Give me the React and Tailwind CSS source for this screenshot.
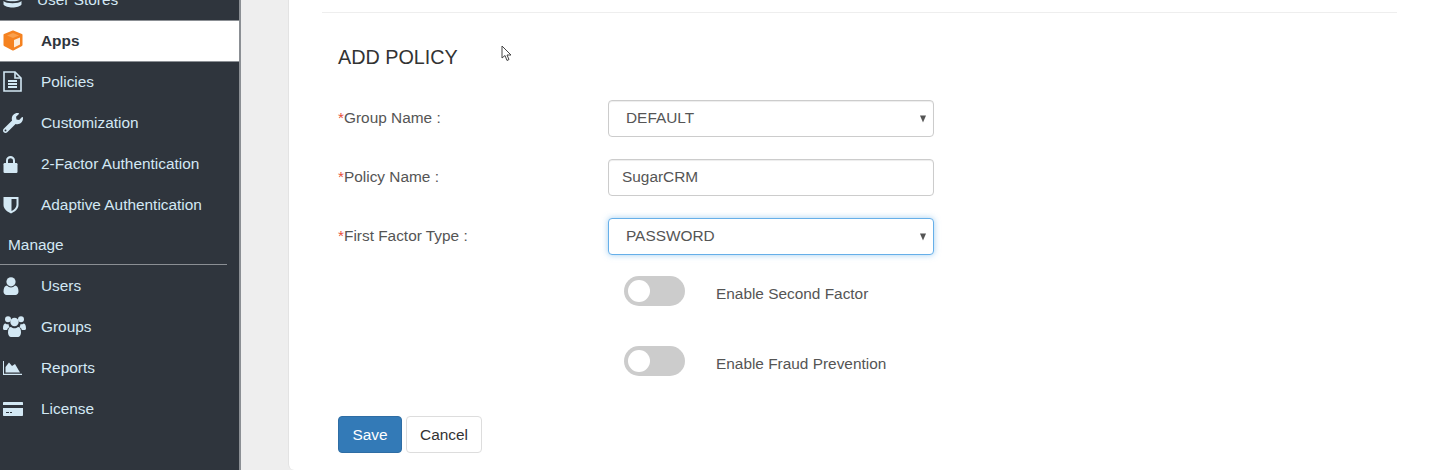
import React from 'react';
import { FaWrench } from 'react-icons/fa';

const CubeIcon = () => (
  <svg width="20" height="21" viewBox="0 0 20 21">
    <path d="M10 1.5 L18.5 5 V15 L10 19.5 L1.5 15 V5 Z" fill="#f58220" stroke="#f58220" strokeWidth="2" strokeLinejoin="round" />
    <path d="M10 3 L16 5.5 L10 8 L4 5.5 Z" fill="#f9a04e" />
    <path d="M11 10 L17 7.5 V14.5 L11 17.5 Z" fill="#fdeedd" />
  </svg>
);

const DatabaseIcon = () => (
  <svg width="19" height="20" viewBox="0 0 19 20" fill="currentColor">
    <ellipse cx="9.5" cy="3.5" rx="9" ry="3.5" />
    <path d="M0.5 6 C3 9 16 9 18.5 6 V9 C16 12 3 12 0.5 9 Z" />
    <path d="M0.5 11 C3 14 16 14 18.5 11 V14.5 C16 18.5 3 18.5 0.5 14.5 Z" />
  </svg>
);

const FileIcon = () => (
  <svg width="19" height="21" viewBox="0 0 19 21" fill="none" stroke="currentColor">
    <path d="M1 1 H12 L18 7 V20 H1 Z" strokeWidth="1.6" />
    <path d="M12 1 V7 H18" strokeWidth="1.6" />
    <path d="M5 10 H14 M5 13 H14 M5 16 H14" strokeWidth="2" />
  </svg>
);

const LockIcon = () => (
  <svg width="15" height="18" viewBox="0 0 15 18" fill="currentColor">
    <path d="M3 8 V5.5 C3 -0.5 12 -0.5 12 5.5 V8 H10 V5.5 C10 2.5 5 2.5 5 5.5 V8 Z" />
    <rect x="0.5" y="8" width="14" height="10" rx="1.2" />
  </svg>
);

const ShieldIcon = () => (
  <svg width="16" height="18" viewBox="0 0 16 18">
    <path d="M0.5 1 H15.5 V9 C15.5 13 11.5 16 8 17.5 C4.5 16 0.5 13 0.5 9 Z" fill="currentColor" />
    <path d="M8.5 3 H13.5 V9 C13.5 11.5 11 13.8 8.5 15 Z" fill="#2f353d" />
  </svg>
);

const UserIcon = () => (
  <svg width="16" height="18" viewBox="0 0 16 18" fill="currentColor">
    <circle cx="8" cy="4.8" r="4.6" />
    <path d="M0.5 14.5 C0.5 10.5 2 8.5 4 8.5 C5 9.8 6.5 10.4 8 10.4 C9.5 10.4 11 9.8 12 8.5 C14 8.5 15.5 10.5 15.5 14.5 C15.5 16.5 14 18 12.5 18 H3.5 C2 18 0.5 16.5 0.5 14.5 Z" />
  </svg>
);

const GroupIcon = () => (
  <svg width="23" height="21" viewBox="0 0 23 21" fill="currentColor">
    <circle cx="5" cy="3.2" r="3" />
    <circle cx="18" cy="3.2" r="3" />
    <circle cx="11.5" cy="6" r="4.2" />
    <path d="M0 12.5 C0 9 1 7.5 2.5 7.5 C3.5 8.3 4.5 8.5 5.6 8.3 C5.8 9.8 6 10.5 6.5 11.2 C5.2 11.8 4.5 12.6 4.2 14 H1.5 C0.5 14 0 13.3 0 12.5 Z" />
    <path d="M23 12.5 C23 9 22 7.5 20.5 7.5 C19.5 8.3 18.5 8.5 17.4 8.3 C17.2 9.8 17 10.5 16.5 11.2 C17.8 11.8 18.5 12.6 18.8 14 H21.5 C22.5 14 23 13.3 23 12.5 Z" />
    <path d="M5 16.5 C5 13 6 11 8 11 C9 12 10.3 12.3 11.5 12.3 C12.7 12.3 14 12 15 11 C17 11 18 13 18 16.5 C18 19 16.5 21 15 21 H8 C6.5 21 5 19 5 16.5 Z" />
  </svg>
);

const ChartIcon = () => (
  <svg width="19" height="14" viewBox="0 0 19 14" fill="currentColor">
    <path d="M0 0 H1 V12.8 H19 V14 H0 Z" />
    <path d="M2.5 11.5 V6 L6 1.5 L9 5 L12 3 L17 11.5 Z" />
  </svg>
);

const CardIcon = () => (
  <svg width="20" height="14" viewBox="0 0 20 14" fill="currentColor">
    <path d="M1 0 H19 C19.6 0 20 0.4 20 1 V3 H0 V1 C0 0.4 0.4 0 1 0 Z" />
    <path fillRule="evenodd" d="M0 6 H20 V13 C20 13.6 19.6 14 19 14 H1 C0.4 14 0 13.6 0 13 Z M3 10 V11 H6 V10 Z M7 10 V11 H9 V10 Z" />
  </svg>
);

const topItems = [
  { label: 'Policies', icon: <FileIcon /> },
  { label: 'Customization', icon: <FaWrench size={20} /> },
  { label: '2-Factor Authentication', icon: <LockIcon /> },
  { label: 'Adaptive Authentication', icon: <ShieldIcon /> },
];

const manageItems = [
  { label: 'Users', icon: <UserIcon /> },
  { label: 'Groups', icon: <GroupIcon /> },
  { label: 'Reports', icon: <ChartIcon /> },
  { label: 'License', icon: <CardIcon /> },
];

const NavItem = ({ label, icon }) => (
  <div className="flex h-[41px] items-center text-[#d3e8f4]">
    <span className="flex w-[41px] items-center pl-[3px]">{icon}</span>
    <span>{label}</span>
  </div>
);

const Arrow = () => (
  <span className="absolute right-[8px] top-1/2 h-0 w-0 -translate-y-1/2 border-x-[3.5px] border-t-[7px] border-x-transparent border-t-[#555]" />
);

const Field = ({ label, children }) => (
  <div className="flex items-center">
    <label className="w-[270px] pb-[2px] text-[#555]">
      <span className="text-[#e8503a]">*</span>
      {label}
    </label>
    <div className="relative w-[326px]">{children}</div>
  </div>
);

const Toggle = ({ label }) => (
  <div className="flex items-center pl-[286px]">
    <span className="flex h-[30px] w-[61px] items-center rounded-full bg-[#ccc] pl-[4px]">
      <span className="h-[22px] w-[22px] rounded-full bg-white" />
    </span>
    <span className="ml-[31px] pt-[6px] text-[#555]">{label}</span>
  </div>
);

const App = () => (
  <div className="flex h-[470px] w-[1430px] overflow-hidden bg-[#eeeeee] text-[15.4px] font-['Liberation_Sans',Arial,sans-serif]">
    <aside className="h-full w-[241px] shrink-0 border-r-2 border-[#8b8f94] bg-[#2f353d]">
      <div className="-mt-[21px] flex h-[41px] items-center text-[#d3e8f4]">
        <span className="flex w-[37px] items-center pl-[3px]">
          <DatabaseIcon />
        </span>
        <span>User Stores</span>
      </div>
      <div className="-mb-px flex h-[42px] items-center border-y border-[#8b8f94] bg-white font-bold text-[#2f353d]">
        <span className="-mt-[2px] flex w-[41px] items-center pl-[3px]">
          <CubeIcon />
        </span>
        <span>Apps</span>
      </div>
      {topItems.map((item) => (
        <NavItem key={item.label} {...item} />
      ))}
      <div className="mr-[12px] flex h-[40px] items-center border-b border-[#8b8f94] pl-[8px] text-[#d3e8f4]">Manage</div>
      {manageItems.map((item) => (
        <NavItem key={item.label} {...item} />
      ))}
    </aside>

    <main className="ml-[47px] flex-1 rounded-bl-[6px] border-l border-[#e3e3e3] bg-white pl-[33px] pr-[33px] pt-[12px]">
      <div className="border-t border-[#eeeeee] pl-[16px]">
        <h1 className="pt-[31px] text-[19.8px] leading-[26px] text-[#333]">ADD POLICY</h1>
        <div className="mt-[30px] flex flex-col gap-[22px]">
          <Field label="Group Name :">
            <select defaultValue="DEFAULT" className="h-[37px] w-full appearance-none rounded-[4px] border border-[#ccc] bg-white pb-[1px] pl-[17px] text-[#555] shadow-[inset_0_1px_1px_rgba(0,0,0,0.075)]">
              <option>DEFAULT</option>
            </select>
            <Arrow />
          </Field>
          <Field label="Policy Name :">
            <input defaultValue="SugarCRM" className="h-[37px] w-full rounded-[4px] border border-[#ccc] bg-white pb-[2px] pl-[13px] text-[#555] shadow-[inset_0_1px_1px_rgba(0,0,0,0.075)]" />
          </Field>
          <Field label="First Factor Type :">
            <select defaultValue="PASSWORD" className="h-[37px] w-full appearance-none rounded-[4px] border border-[#66afe9] bg-white pb-[2px] pl-[17px] text-[#555] shadow-[0_0_6px_rgba(102,175,233,0.6)]">
              <option>PASSWORD</option>
            </select>
            <Arrow />
          </Field>
        </div>
        <div className="mt-[21px] flex flex-col gap-[40px]">
          <Toggle label="Enable Second Factor" />
          <Toggle label="Enable Fraud Prevention" />
        </div>
        <div className="mt-[40px] flex gap-[4px]">
          <button className="h-[37px] w-[64px] rounded-[4px] border border-[#2e6da4] bg-[#337ab7] text-white">Save</button>
          <button className="h-[37px] w-[76px] rounded-[4px] border border-[#ddd] bg-white text-[#333]">Cancel</button>
        </div>
      </div>
    </main>

    <svg className="absolute left-[501px] top-[45px]" width="12" height="18" viewBox="0 0 12 18">
      <path d="M1 1 L1 13 L4 10.5 L6 15.5 L8 14.5 L6 10 L10 10 Z" fill="#fff" stroke="#444" strokeWidth="1" />
    </svg>
  </div>
);

export default App;
